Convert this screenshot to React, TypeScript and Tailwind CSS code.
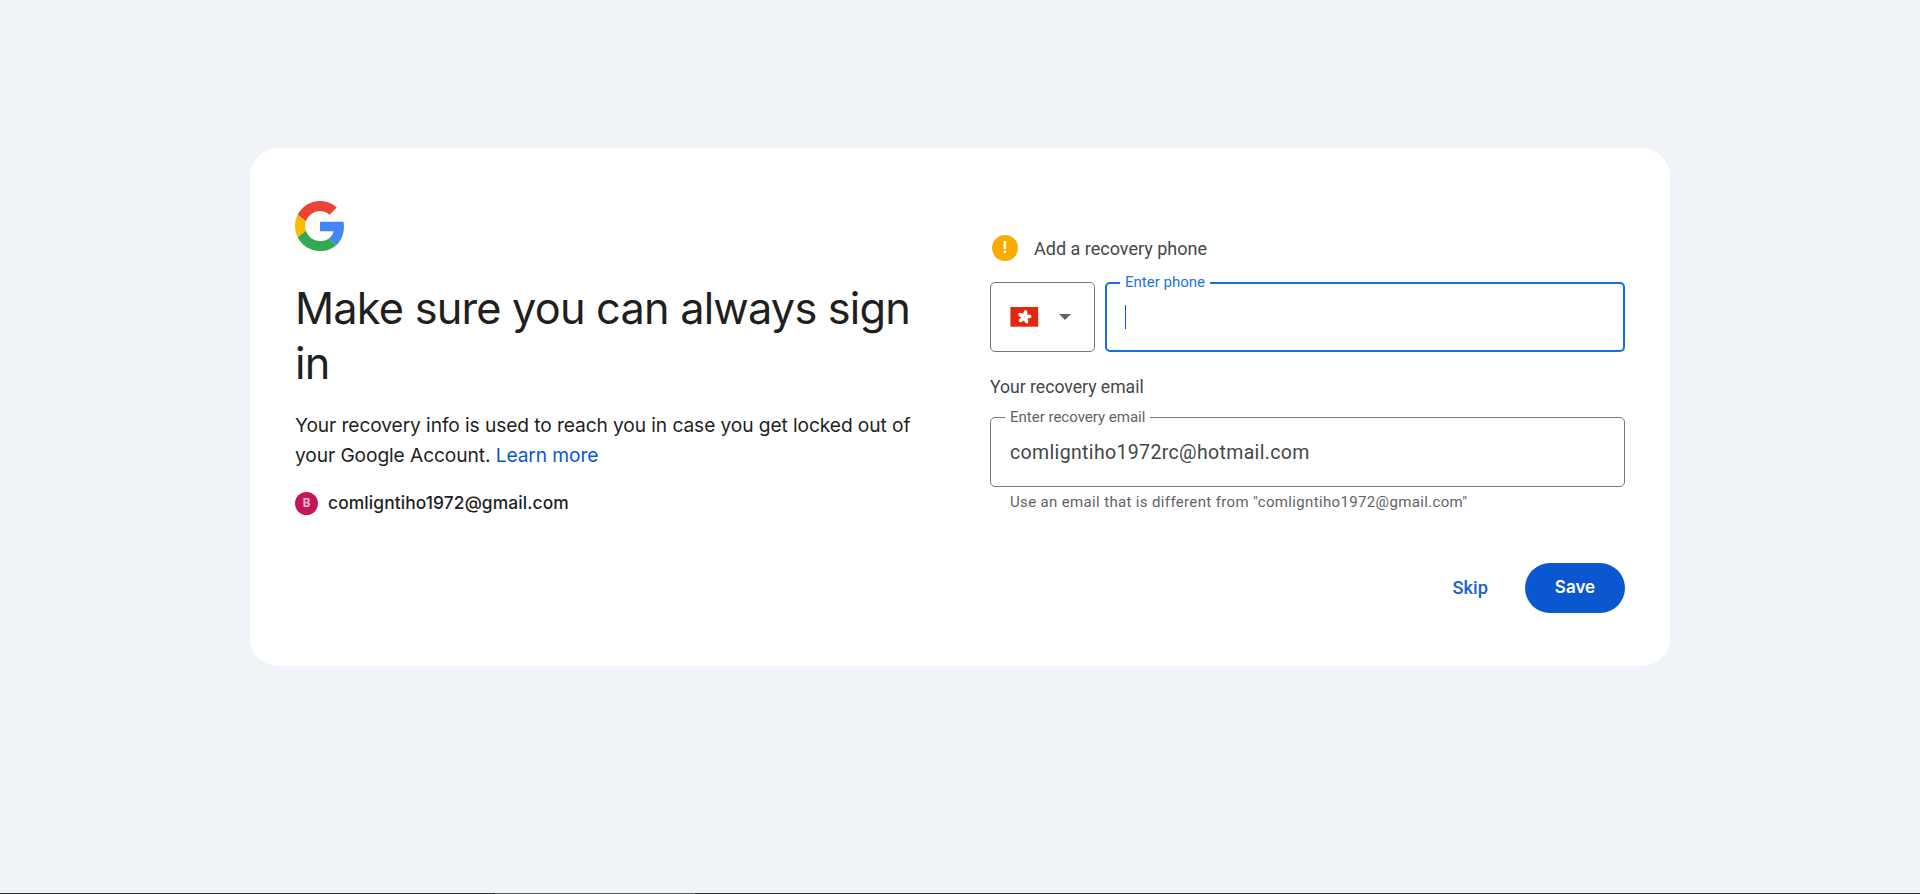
import React from 'react';

function GoogleLogo() {
  return (
    <svg viewBox="0 0 48 48" className="w-[50px] h-[50px] block">
      <path fill="#EA4335" d="M24 9.5c3.54 0 6.71 1.22 9.21 3.6l6.85-6.85C35.9 2.38 30.47 0 24 0 14.62 0 6.51 5.38 2.56 13.22l7.98 6.19C12.43 13.72 17.74 9.5 24 9.5z" />
      <path fill="#4285F4" d="M46.98 24.55c0-1.57-.15-3.09-.38-4.55H24v9.02h12.94c-.58 2.96-2.26 5.48-4.78 7.18l7.73 6c4.51-4.18 7.09-10.36 7.09-17.65z" />
      <path fill="#FBBC05" d="M10.53 28.59c-.48-1.45-.76-2.99-.76-4.59s.27-3.14.76-4.59l-7.98-6.19C.92 16.46 0 20.12 0 24c0 3.88.92 7.54 2.56 10.78l7.97-6.19z" />
      <path fill="#34A853" d="M24 48c6.48 0 11.93-2.13 15.89-5.81l-7.73-6c-2.15 1.45-4.92 2.3-8.16 2.3-6.26 0-11.57-4.22-13.47-9.91l-7.98 6.19C6.51 42.62 14.62 48 24 48z" />
    </svg>
  );
}

function HongKongFlag() {
  return (
    <svg viewBox="0 0 28 20" className="w-[29px] h-[20px] block">
      <rect width="28" height="20" fill="#f4b0a4" />
      <rect width="27.5" height="19.5" fill="#e0280f" />
      <g fill="#ffffff">
        <ellipse cx="14" cy="6.4" rx="2" ry="3.4" transform="rotate(12 14 10)" />
        <ellipse cx="14" cy="6.4" rx="2" ry="3.4" transform="rotate(84 14 10)" />
        <ellipse cx="14" cy="6.4" rx="2" ry="3.4" transform="rotate(156 14 10)" />
        <ellipse cx="14" cy="6.4" rx="2" ry="3.4" transform="rotate(228 14 10)" />
        <ellipse cx="14" cy="6.4" rx="2" ry="3.4" transform="rotate(300 14 10)" />
      </g>
      <circle cx="14" cy="10" r="0.6" fill="#f08a7a" />
    </svg>
  );
}

export default function App() {
  return (
    <div className="h-screen flex flex-col bg-[#f0f4f9] text-[#1f1f1f] font-['Roboto',sans-serif] overflow-hidden">
      <main className="flex-1 flex justify-center items-start pt-[148px]">
        <div className="w-[1420px] h-[518px] bg-white rounded-[28px] px-[45px] pt-[53px] pb-[53px] grid grid-cols-2 gap-x-[60px]">
          {/* left column */}
          <div>
            <GoogleLogo />
            <h1 className="mt-[30px] font-['Inter',sans-serif] font-normal text-[43.3px] leading-[55px] tracking-[-0.8px]">
              Make sure you can always sign in
            </h1>
            <p className="mt-[19px] font-['Inter',sans-serif] text-[19.2px] leading-[30px] tracking-[-0.1px]">
              Your recovery info is used to reach you in case you get locked out of your Google Account.{' '}
              <a href="#" className="text-[#0b57d0]">Learn more</a>
            </p>
            <div className="mt-[20px] flex items-center gap-[10px]">
              <span className="w-[23px] h-[23px] rounded-full bg-[#c2185b] text-[#f8bbd0] text-[12px] font-bold flex items-center justify-center">B</span>
              <span className="font-['Inter',sans-serif] text-[17.4px] font-medium tracking-[0.1px]">comligntiho1972@gmail.com</span>
            </div>
          </div>

          {/* right column */}
          <div className="flex flex-col">
            <div className="mt-[34px] h-[26px] flex items-center pl-[2px] gap-[16px]">
              <span className="w-[26px] h-[26px] rounded-full bg-[#f9ab00] text-white text-[16px] font-bold flex items-center justify-center">!</span>
              <span className="text-[18px] text-[#444746]">Add a recovery phone</span>
            </div>

            <div className="mt-[21px] flex gap-[10px]">
              <div className="w-[105px] h-[70px] shrink-0 border border-[#747775] rounded-[5px] flex items-center pl-[19px] gap-[20px]">
                <HongKongFlag />
                <span className="w-0 h-0 border-x-[6px] border-x-transparent border-t-[6px] border-t-[#5f6368]" />
              </div>
              <div className="relative flex-1 h-[70px] border-2 border-[#1a6ce3] rounded-[5px] flex items-center pl-[18px]">
                <span className="absolute left-[13px] -top-[11px] px-[5px] bg-white text-[15px] leading-[18px] text-[#1a73e8]">Enter phone</span>
                <span className="w-px h-[24px] bg-[#0b57d0]" />
              </div>
            </div>

            <div className="mt-[25px] text-[17.6px] leading-[20px] text-[#444746]">Your recovery email</div>

            <div className="relative mt-[20px] h-[70px] border border-[#747775] rounded-[5px] flex items-center pl-[19px] pt-[2px] text-[19.5px] tracking-[0.35px] text-[#444746]">
              <span className="absolute left-[14px] -top-[10px] px-[5px] bg-white text-[15px] tracking-normal leading-[18px] text-[#5f6368]">Enter recovery email</span>
              comligntiho1972rc@hotmail.com
            </div>
            <div className="mt-[6px] pl-[20px] text-[15px] leading-[18px] tracking-[0.35px] text-[#5f6368]">
              Use an email that is different from "comligntiho1972@gmail.com"
            </div>

            <div className="mt-auto flex justify-end items-center gap-[37px]">
              <a href="#" className="text-[#1a62d6] text-[18.3px] font-medium">Skip</a>
              <button className="w-[100px] h-[50px] rounded-full bg-[#0b57d0] text-white text-[17px] font-semibold font-['Inter',sans-serif]">Save</button>
            </div>
          </div>
        </div>
      </main>
      <div className="h-px shrink-0 bg-[#2b2b2b] flex">
        <div className="ml-[495px] w-[200px] bg-[#5a5a5a]" />
      </div>
    </div>
  );
}
